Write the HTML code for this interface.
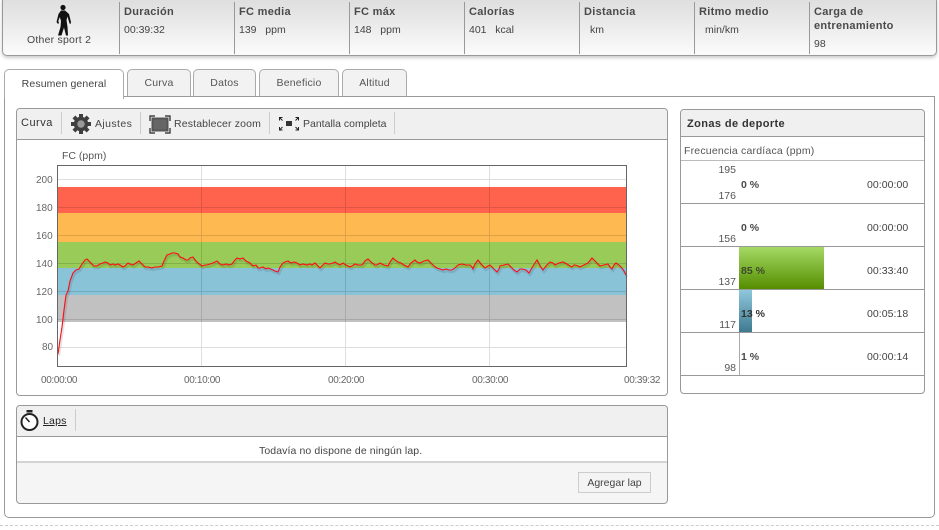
<!DOCTYPE html>
<html><head><meta charset="utf-8"><style>
*{box-sizing:border-box}
html,body{margin:0;padding:0;background:#fff}
body{width:939px;height:530px;overflow:hidden;position:relative;font-family:"Liberation Sans",Arial,sans-serif;font-size:10.5px;color:#444}
.a{position:absolute;white-space:nowrap}
.top{left:2px;top:-2px;width:935px;height:58px;border:1px solid #999;border-radius:0 0 5px 5px;background:linear-gradient(#dedede,#e9e9e9 40%,#fafafa 95%);box-shadow:0 2px 3px #ccc}
.dv{top:2px;width:1px;height:52px;background:#999}
.h{font-weight:bold;font-size:11px;letter-spacing:.3px;color:#4a4a4a}
.tab{top:69px;height:28px;border:1px solid #aaa;border-bottom:1px solid #999;border-radius:5px 5px 0 0;background:#f2f2f2;text-align:center;line-height:26px;color:#555;letter-spacing:.2px}
.pan{border:1px solid #999;border-radius:4px;background:#fff}
.ph{background:#f0f0f0;border-bottom:1px solid #999;border-radius:4px 4px 0 0}
.sep{width:1px;background:#ccc}
.ax{color:#666;font-size:10px}
.xl{letter-spacing:-.35px}
.r{left:681px;width:243px;height:1px;background:#999}
.t{color:#444;left:867px;letter-spacing:.05px}
.p{font-weight:bold;left:741px;color:#4a4a4a}
.z{text-align:right;width:52px;left:684px;color:#555}
</style></head><body>
<div class="a top"></div>
<svg class="a" style="left:55px;top:3px" width="18" height="34" viewBox="0 0 18 34"><circle cx="8" cy="4.500" r="2.600" fill="#111"/><path fill="#111" fill-rule="evenodd" d="M6 7.500L10 7.500L14 11L16 19L15.500 21L14.500 20.500L12.500 13.500L11.500 17L12.500 24L13 32.500H11L9 24.500L6.500 32.500H3L5.500 24L6 18L4.800 14L3.300 18L4 20L3 21L1.500 19L3.500 11Z"/></svg>
<div class="a" style="left:27px;top:34px;color:#444;letter-spacing:.22px">Other sport 2</div>
<div class="a dv" style="left:119px"></div><div class="a dv" style="left:234px"></div><div class="a dv" style="left:349px"></div><div class="a dv" style="left:464px"></div><div class="a dv" style="left:579px"></div><div class="a dv" style="left:694px"></div><div class="a dv" style="left:809px"></div>
<div class="a h" style="left:124px;top:6px;font-weight:bold">Duración</div><div class="a" style="left:124px;top:24px">00:39:32</div>
<div class="a h" style="left:239px;top:6px">FC media</div><div class="a" style="left:239px;top:24px">139 &nbsp; ppm</div>
<div class="a h" style="left:354px;top:6px">FC máx</div><div class="a" style="left:354px;top:24px">148 &nbsp; ppm</div>
<div class="a h" style="left:469px;top:6px">Calorías</div><div class="a" style="left:469px;top:24px">401 &nbsp; kcal</div>
<div class="a h" style="left:584px;top:6px">Distancia</div><div class="a" style="left:590px;top:24px">km</div>
<div class="a h" style="left:699px;top:6px">Ritmo medio</div><div class="a" style="left:705px;top:24px">min/km</div>
<div class="a h" style="left:814px;top:5px;line-height:14px">Carga de<br>entrenamiento</div><div class="a" style="left:814px;top:38px">98</div>

<div class="a" style="left:4px;top:96px;width:931px;height:422px;border:1px solid #999;border-radius:0 0 5px 5px"></div>
<div class="a tab" style="left:4px;width:120px;height:30px;background:#fff;border-bottom:0;color:#444;line-height:28px;z-index:2;letter-spacing:.12px">Resumen general</div>
<div class="a tab" style="left:127px;width:64px">Curva</div>
<div class="a tab" style="left:193px;width:63px">Datos</div>
<div class="a tab" style="left:259px;width:80px">Beneficio</div>
<div class="a tab" style="left:342px;width:65px">Altitud</div>

<div class="a pan" style="left:16px;top:108px;width:652px;height:288px"></div>
<div class="a ph" style="left:17px;top:109px;width:650px;height:31px"></div>
<div class="a" style="left:21px;top:117px;font-size:11px;color:#333;letter-spacing:.5px">Curva</div>
<div class="a sep" style="left:61px;top:112px;height:22px"></div>
<svg class="a" style="left:71px;top:114px" width="20" height="20" viewBox="0 0 20 20"><path stroke="#3f3f3f" stroke-width="4" d="M10 0V20M0 10H20M2.900 2.900L17.100 17.100M17.100 2.900L2.900 17.100"/><circle cx="10" cy="10" r="5.500" fill="#999" stroke="#3f3f3f" stroke-width="3.500"/></svg>
<div class="a" style="left:95px;top:118px;letter-spacing:.4px">Ajustes</div>
<div class="a sep" style="left:140px;top:112px;height:22px"></div>
<svg class="a" style="left:149px;top:115px" width="22" height="19" viewBox="0 0 22 19"><rect x="3.500" y="3.500" width="15" height="12" fill="#666" stroke="#555" stroke-width="2"/><path fill="none" stroke="#222" stroke-width="1.200" d="M1 6V1h5M16 1h5v5M1 13v5h5M16 18h5v-5"/></svg>
<div class="a" style="left:174px;top:118px;letter-spacing:.15px">Restablecer zoom</div>
<div class="a sep" style="left:269px;top:112px;height:22px"></div>
<svg class="a" style="left:278px;top:115px" width="22" height="18" viewBox="0 0 22 18"><rect x="8" y="6" width="6" height="5" fill="#333"/><path fill="none" stroke="#222" stroke-width="1" d="M1.500 5.500V2.500h3M1.500 2.500l3 3M20.500 5.500V2.500h-3M20.500 2.500l-3 3M1.500 12v3h3M1.500 15l3-3M20.500 12v3h-3M20.500 15l-3-3"/></svg>
<div class="a" style="left:303px;top:118px">Pantalla completa</div>
<div class="a sep" style="left:394px;top:112px;height:22px"></div>

<svg class="a" style="left:0;top:0" width="939" height="530">
<defs><polyline id="hr" fill="none" points="58,354 60,340 62,327 64,310 66,295 68,291 70,281 73,273 76,270 79,269 82,264 85,260 87,259 89,261 92,264 94,266 97,266 100,264 103,263 105,262 108,263 110,265 113,264 115,265 118,264 120,265 123,267 125,266 128,263 130,264 133,265 136,263 139,261 142,264 145,267 148,267 152,268 155,267 158,267 162,266 164,261 167,255 170,254 172,253 175,253 178,254 180,257 183,258 186,260 188,260 190,258 193,257 195,260 198,263 202,266 205,265 207,265 210,264 213,263 217,261 220,264 223,265 226,264 229,265 232,264 235,260 237,258 240,259 243,258 246,261 250,263 253,266 256,265 258,268 260,268 263,267 266,269 268,268 273,270 275,271 278,272 280,267 283,263 285,262 288,261 291,263 294,262 297,263 300,265 303,264 307,265 310,264 312,265 315,263 317,265 320,268 322,266 325,263 328,264 330,264 333,263 335,262 338,264 340,265 343,263 346,265 350,267 352,266 355,264 358,265 362,265 365,261 368,259 371,262 375,265 377,265 380,263 384,265 388,266 390,262 393,258 395,260 398,262 401,263 404,265 408,267 411,263 415,260 417,262 420,263 424,261 428,260 431,263 434,266 437,268 440,269 443,270 446,269 449,270 452,270 455,268 458,265 462,264 466,265 470,265 472,267 473,269 475,264 478,260 481,264 485,268 488,266 490,265 493,268 497,272 499,269 500,266 504,265 508,264 511,267 514,270 517,272 520,269 522,269 526,270 529,273 533,266 537,260 540,266 543,270 546,266 550,262 553,263 555,265 559,263 563,262 567,264 570,266 572,267 574,265 575,265 578,266 580,267 584,265 588,263 592,258 596,262 600,266 604,265 608,264 610,267 612,269 614,265 616,263 619,265 622,268 624,271 626,275"/></defs>
<rect x="57.500" y="187" width="569" height="26" fill="#ff634d"/>
<rect x="57.500" y="213" width="569" height="29" fill="#ffb951"/>
<rect x="57.500" y="242" width="569" height="26" fill="#98cb58"/>
<rect x="57.500" y="268" width="569" height="27" fill="#89c3d8"/>
<rect x="57.500" y="295" width="569" height="27" fill="#c1c1c1"/>
<g stroke="#000" stroke-opacity=".13" stroke-width="1">
<path d="M57 179.500H627M57 207.500H627M57 235.500H627M57 263.500H627M57 291.500H627M57 319.500H627M57 347.500H627M201.500 165V367M345.500 165V367M489.500 165V367"/>
</g>
<use href="#hr" transform="translate(1,2)" stroke="#000" stroke-opacity=".1" stroke-width="2.500"/>
<use href="#hr" stroke="#ff0a14" stroke-width="1.100"/>
<rect x="57.500" y="165.500" width="569" height="201" fill="none" stroke="#666"/>
</svg>
<div class="a" style="left:62px;top:150px;color:#555">FC (ppm)</div>
<div class="a ax" style="left:36px;top:175px">200</div><div class="a ax" style="left:36px;top:203px">180</div><div class="a ax" style="left:36px;top:231px">160</div><div class="a ax" style="left:36px;top:259px">140</div><div class="a ax" style="left:36px;top:287px">120</div><div class="a ax" style="left:36px;top:315px">100</div><div class="a ax" style="left:42px;top:342px">80</div>
<div class="a ax xl" style="left:41px;top:375px">00:00:00</div><div class="a ax xl" style="left:184px;top:375px">00:10:00</div><div class="a ax xl" style="left:328px;top:375px">00:20:00</div><div class="a ax xl" style="left:472px;top:375px">00:30:00</div><div class="a ax xl" style="left:624px;top:375px">00:39:32</div>

<div class="a pan" style="left:680px;top:109px;width:245px;height:285px"></div>
<div class="a ph" style="left:681px;top:110px;width:243px;height:27px"></div>
<div class="a" style="left:687px;top:118px;font-weight:bold;font-size:11px;color:#333;letter-spacing:.4px">Zonas de deporte</div>
<div class="a" style="left:684px;top:145px;color:#555;letter-spacing:.2px">Frecuencia cardíaca (ppm)</div>
<div class="a r" style="top:160px;background:#bbb"></div><div class="a r" style="top:203px"></div><div class="a r" style="top:246px"></div><div class="a r" style="top:289px"></div><div class="a r" style="top:332px"></div><div class="a r" style="top:375px"></div>
<div class="a" style="left:739px;top:247px;width:85px;height:42px;background:linear-gradient(#a4da64,#558d00)"></div>
<div class="a" style="left:739px;top:290px;width:13px;height:42px;background:linear-gradient(#8fc7dc,#3f7a90)"></div>
<div class="a" style="left:739px;top:333px;width:1px;height:42px;background:#aaa"></div>
<div class="a z" style="top:164px">195</div><div class="a z" style="top:190px">176</div><div class="a z" style="top:233px">156</div><div class="a z" style="top:276px">137</div><div class="a z" style="top:319px">117</div><div class="a z" style="top:362px">98</div>
<div class="a p" style="top:179px">0 %</div><div class="a p" style="top:222px">0 %</div><div class="a p" style="top:265px;color:#3d4a2c">85 %</div><div class="a p" style="top:308px;color:#333">13 %</div><div class="a p" style="top:351px">1 %</div>
<div class="a t" style="top:179px">00:00:00</div><div class="a t" style="top:222px">00:00:00</div><div class="a t" style="top:265px">00:33:40</div><div class="a t" style="top:308px">00:05:18</div><div class="a t" style="top:351px">00:00:14</div>

<div class="a pan" style="left:16px;top:405px;width:652px;height:99px;background:#f5f5f5"></div>
<div class="a ph" style="left:17px;top:406px;width:650px;height:31px"></div>
<div class="a" style="left:17px;top:437px;width:650px;height:26px;background:#fff;border-bottom:2px solid #d4d4d4"></div>
<svg class="a" style="left:20px;top:410px" width="19" height="22" viewBox="0 0 19 22"><rect x="6.500" y="0" width="6" height="2.500" fill="#222"/><circle cx="9.500" cy="12" r="8" fill="#fff" stroke="#222" stroke-width="2"/><path d="M5.500 7.500L9.500 12" stroke="#222" stroke-width="1.500"/></svg>
<div class="a" style="left:43px;top:415px;text-decoration:underline;color:#222;letter-spacing:.2px">Laps</div>
<div class="a sep" style="left:75px;top:409px;height:22px"></div>
<div class="a" style="left:259px;top:445px;color:#444;letter-spacing:.1px">Todavía no dispone de ningún lap.</div>
<div class="a" style="left:578px;top:472px;width:73px;height:21px;border:1px solid #ccc;background:#f4f4f4;text-align:center;line-height:21px;color:#444">Agregar lap</div>

<div class="a" style="left:0;top:525px;width:939px;border-top:1px dashed #ccc"></div>
</body></html>
